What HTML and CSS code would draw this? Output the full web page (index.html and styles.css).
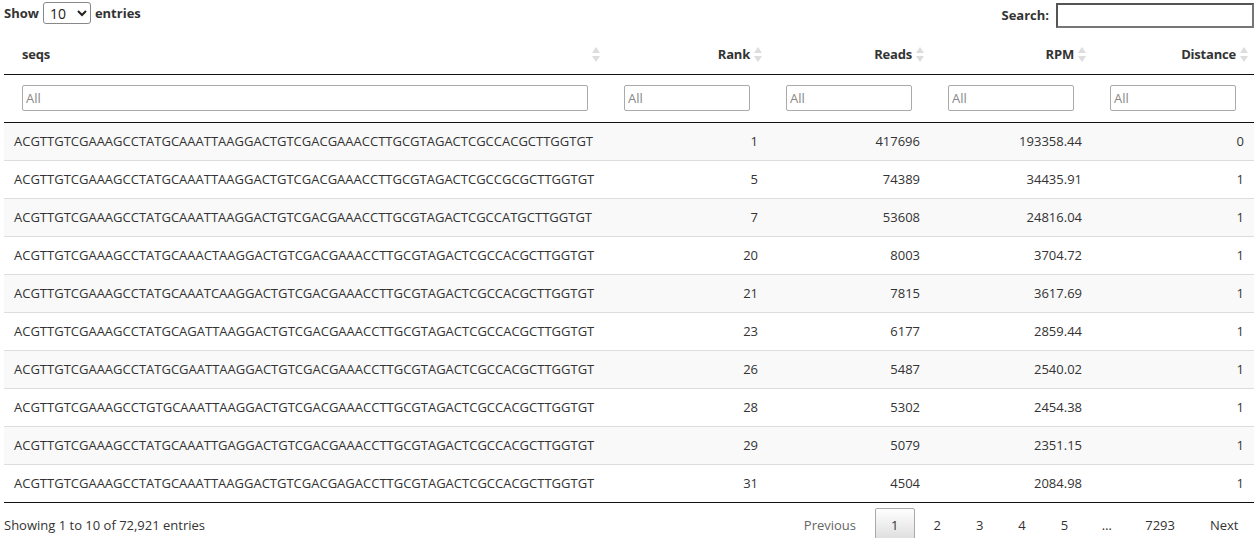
FILE: index.html
```html
<!DOCTYPE html>
<html>
<head>
<meta charset="utf-8">
<link rel="stylesheet" href="styles.css">
</head>
<body>
<div class="wrapper">
  <div class="top">
    <label class="length">Show <select class="len-select"><option>10</option></select> entries</label>
    <label class="search">Search: <input class="search-input" type="search"></label>
  </div>
  <table class="dt">
    <colgroup>
      <col class="c-seq"><col class="c-num"><col class="c-num"><col class="c-num"><col class="c-num">
    </colgroup>
    <thead>
      <tr class="head">
        <th class="left">seqs<span class="sort"></span></th>
        <th>Rank<span class="sort"></span></th>
        <th>Reads<span class="sort"></span></th>
        <th>RPM<span class="sort"></span></th>
        <th>Distance<span class="sort"></span></th>
      </tr>
      <tr class="filters">
        <td><input class="filter" placeholder="All"></td>
        <td><input class="filter" placeholder="All"></td>
        <td><input class="filter" placeholder="All"></td>
        <td><input class="filter" placeholder="All"></td>
        <td><input class="filter" placeholder="All"></td>
      </tr>
    </thead>
    <tbody>
      <tr class="odd"><td class="left">ACGTTGTCGAAAGCCTATGCAAATTAAGGACTGTCGACGAAACCTTGCGTAGACTCGCCACGCTTGGTGT</td><td>1</td><td>417696</td><td>193358.44</td><td>0</td></tr>
      <tr><td class="left">ACGTTGTCGAAAGCCTATGCAAATTAAGGACTGTCGACGAAACCTTGCGTAGACTCGCCGCGCTTGGTGT</td><td>5</td><td>74389</td><td>34435.91</td><td>1</td></tr>
      <tr class="odd"><td class="left">ACGTTGTCGAAAGCCTATGCAAATTAAGGACTGTCGACGAAACCTTGCGTAGACTCGCCATGCTTGGTGT</td><td>7</td><td>53608</td><td>24816.04</td><td>1</td></tr>
      <tr><td class="left">ACGTTGTCGAAAGCCTATGCAAACTAAGGACTGTCGACGAAACCTTGCGTAGACTCGCCACGCTTGGTGT</td><td>20</td><td>8003</td><td>3704.72</td><td>1</td></tr>
      <tr class="odd"><td class="left">ACGTTGTCGAAAGCCTATGCAAATCAAGGACTGTCGACGAAACCTTGCGTAGACTCGCCACGCTTGGTGT</td><td>21</td><td>7815</td><td>3617.69</td><td>1</td></tr>
      <tr><td class="left">ACGTTGTCGAAAGCCTATGCAGATTAAGGACTGTCGACGAAACCTTGCGTAGACTCGCCACGCTTGGTGT</td><td>23</td><td>6177</td><td>2859.44</td><td>1</td></tr>
      <tr class="odd"><td class="left">ACGTTGTCGAAAGCCTATGCGAATTAAGGACTGTCGACGAAACCTTGCGTAGACTCGCCACGCTTGGTGT</td><td>26</td><td>5487</td><td>2540.02</td><td>1</td></tr>
      <tr><td class="left">ACGTTGTCGAAAGCCTGTGCAAATTAAGGACTGTCGACGAAACCTTGCGTAGACTCGCCACGCTTGGTGT</td><td>28</td><td>5302</td><td>2454.38</td><td>1</td></tr>
      <tr class="odd"><td class="left">ACGTTGTCGAAAGCCTATGCAAATTGAGGACTGTCGACGAAACCTTGCGTAGACTCGCCACGCTTGGTGT</td><td>29</td><td>5079</td><td>2351.15</td><td>1</td></tr>
      <tr><td class="left">ACGTTGTCGAAAGCCTATGCAAATTAAGGACTGTCGACGAGACCTTGCGTAGACTCGCCACGCTTGGTGT</td><td>31</td><td>4504</td><td>2084.98</td><td>1</td></tr>
    </tbody>
  </table>
  <div class="bottom">
    <div class="info">Showing 1 to 10 of 72,921 entries</div>
    <div class="paginate">
      <span class="pbtn disabled">Previous</span>
      <span class="pbtn current">1</span>
      <span class="pbtn">2</span>
      <span class="pbtn">3</span>
      <span class="pbtn">4</span>
      <span class="pbtn">5</span>
      <span class="ellipsis">…</span>
      <span class="pbtn">7293</span>
      <span class="pbtn">Next</span>
    </div>
  </div>
</div>
</body>
</html>
```
FILE: styles.css
```css
html, body { margin: 0; padding: 0; background: #fff; }
body {
  font-family: "Open Sans", "Liberation Sans", sans-serif;
  font-size: 13px;
  color: #333;
  overflow: hidden;
}
.wrapper { padding: 0 2px 0 4px; }
.top {
  display: flex;
  justify-content: space-between;
  align-items: center;
  height: 30px;
}
.length, .search { font-weight: bold; display: flex; align-items: center; gap: 4px; }
.length { margin-top: -4px; }
.len-select {
  width: 48px; height: 22px;
  font: inherit; font-weight: normal; font-size: 14px;
  border: 1px solid #888; border-radius: 3px; background: #fff;
  padding: 0 2px; color: #222;
}
.search-input {
  width: 198px; height: 25px; box-sizing: border-box;
  border: 2px solid; border-color: #555 #767676 #767676 #555;
  margin-left: 3px;
}
.dt {
  width: 1250px;
  table-layout: fixed;
  border-collapse: collapse;
  margin-top: 3px;
}
.c-seq { width: 602px; }
.c-num { width: 162px; }
.dt th {
  position: relative;
  text-align: right;
  font-weight: bold;
  height: 41px;
  box-sizing: border-box;
  padding: 1px 18px 0;
  border-bottom: 1px solid #111;
  letter-spacing: -0.2px;
}
.dt th.left { text-align: left; }
.sort {
  position: absolute;
  right: 5px; top: 14px;
  width: 9px; height: 15px;
}
.sort::before, .sort::after {
  content: "";
  position: absolute; left: 0;
  border-left: 4.5px solid transparent;
  border-right: 4.5px solid transparent;
}
.sort::before { top: 0; border-bottom: 6px solid #ddd; }
.sort::after { bottom: 0; border-top: 6px solid #ddd; }
.filters td {
  height: 48px;
  padding: 0 18px;
  box-sizing: border-box;
  border-bottom: 1px solid #111;
}
.filter {
  display: block;
  width: 100%; height: 26px; box-sizing: border-box;
  border: 1px solid #aaa; border-radius: 2px;
  padding: 0 3px; font: inherit; color: #333;
}
.filter::placeholder { color: #888; }
.dt tbody td {
  height: 38px; box-sizing: border-box;
  padding: 0 10px;
  text-align: right;
  border-bottom: 1px solid #ddd;
  white-space: nowrap;
}
.dt tbody td.left { text-align: left; }
.dt tbody tr.odd td { background: #f9f9f9; }
.dt tbody tr:last-child td { border-bottom: 1px solid #111; }
.bottom {
  display: flex; justify-content: space-between; align-items: flex-start;
  padding-top: 5px;
}
.info { padding-top: 8px; }
.paginate { display: flex; align-items: center; margin-right: -1px; }
.pbtn, .ellipsis {
  box-sizing: border-box;
  height: 34px; line-height: 32px;
  padding: 0 15.5px;
  text-align: center;
  margin-left: 2px;
  border: 1px solid transparent;
  color: #333;
}
.ellipsis { width: 40px; padding: 0; }
.pbtn.disabled { color: #666; }
.pbtn.current {
  border: 1px solid #aaa; border-radius: 2px;
  background: linear-gradient(to bottom, #fff 0%, #dcdcdc 100%);
}
```
